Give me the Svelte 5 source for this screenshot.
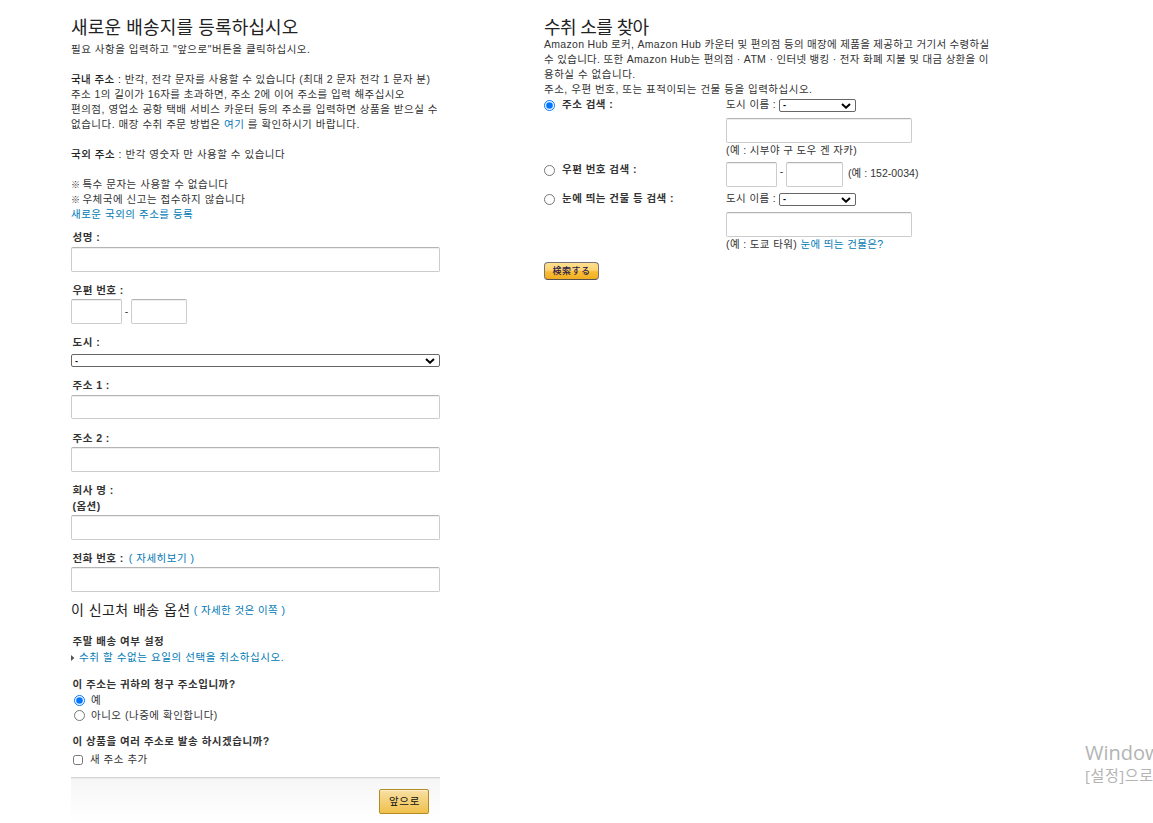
<script lang="ts">
  let billing = $state('yes')
  let searchBy = $state('address')
  let multiple = $state(false)
</script>

<div class="page">
  <form class="register" onsubmit={(e) => e.preventDefault()}>
    <h1>새로운 배송지를 등록하십시오</h1>
    <div class="intro">
      <p>필요 사항을 입력하고 "앞으로"버튼을 클릭하십시오.</p>
      <br />
      <p class="mixed"><b>국내 주소 :</b> 반각, 전각 문자를 사용할 수 있습니다 (최대 2 문자 전각 1 문자 분)</p>
      <p class="mixed">주소 1의 길이가 16자를 초과하면, 주소 2에 이어 주소를 입력 해주십시오</p>
      <p>편의점, 영업소 공항 택배 서비스 카운터 등의 주소를 입력하면 상품을 받으실 수</p>
      <p>없습니다. 매장 수취 주문 방법은 <a href="#here">여기</a> 를 확인하시기 바랍니다.</p>
      <br />
      <p><b>국외 주소 :</b> 반각 영숫자 만 사용할 수 있습니다</p>
      <br />
      <p><span class="mark">※</span> 특수 문자는 사용할 수 없습니다</p>
      <p><span class="mark">※</span> 우체국에 신고는 접수하지 않습니다</p>
      <p><a href="#overseas">새로운 국외의 주소를 등록</a></p>
    </div>

    <div class="field name">
      <label for="name">성명 :</label>
      <input id="name" type="text" />
    </div>
    <div class="field zip">
      <label for="zip1">우편 번호 :</label>
      <div class="zip-row">
        <input id="zip1" class="zip1" type="text" />
        <span class="dash">-</span>
        <input class="zip2" type="text" />
      </div>
    </div>
    <div class="field city">
      <label for="city">도시 :</label>
      <select id="city"><option>-</option></select>
    </div>
    <div class="field addr1">
      <label for="addr1">주소 1 :</label>
      <input id="addr1" type="text" />
    </div>
    <div class="field addr2">
      <label for="addr2">주소 2 :</label>
      <input id="addr2" type="text" />
    </div>
    <div class="field company">
      <label for="company">회사 명 :<br />(옵션)</label>
      <input id="company" type="text" />
    </div>
    <div class="field phone">
      <div class="label-row">
        <label for="phone">전화 번호 :</label>
        <a href="#phone-detail">( 자세히보기 )</a>
      </div>
      <input id="phone" type="text" />
    </div>

    <div class="options-head">
      <h2>이 신고처 배송 옵션</h2>
      <a href="#options">( 자세한 것은 이쪽 )</a>
    </div>

    <div class="weekend">
      <p class="title">주말 배송 여부 설정</p>
      <div class="toggle">
        <svg width="4" height="6" viewBox="0 0 4 6"><path d="M0 0L3.4 3L0 6Z" fill="#555" /></svg>
        <a href="#days">수취 할 수없는 요일의 선택을 취소하십시오.</a>
      </div>
    </div>

    <div class="question">
      <p class="title">이 주소는 귀하의 청구 주소입니까?</p>
      <label class="choice"><input type="radio" value="yes" bind:group={billing} />예</label>
      <label class="choice no"><input type="radio" value="no" bind:group={billing} />아니오 (나중에 확인합니다)</label>
    </div>

    <div class="question multi">
      <p class="title">이 상품을 여러 주소로 발송 하시겠습니까?</p>
      <label class="choice"><input type="checkbox" bind:checked={multiple} />새 주소 추가</label>
    </div>

    <div class="footer">
      <button class="next">앞으로</button>
    </div>
  </form>

  <form class="pickup" onsubmit={(e) => e.preventDefault()}>
    <h1>수취 소를 찾아</h1>
    <div class="intro">
      <p class="latin">Amazon Hub 로커, Amazon Hub 카운터 및 편의점 등의 매장에 제품을 제공하고 거기서 수령하실</p>
      <p class="latin">수 있습니다. 또한 Amazon Hub는 편의점 · ATM · 인터넷 뱅킹 · 전자 화폐 지불 및 대금 상환을 이</p>
      <p>용하실 수 없습니다.</p>
      <p>주소, 우편 번호, 또는 표적이되는 건물 등을 입력하십시오.</p>
    </div>

    <div class="row by-address">
      <input type="radio" value="address" bind:group={searchBy} />
      <p class="title">주소 검색 :</p>
      <div class="cell">
        <div class="city-row">도시 이름 : <select><option>-</option></select></div>
        <input type="text" />
        <p>(예 : 시부야 구 도우 겐 자카)</p>
      </div>
    </div>
    <div class="row by-zip">
      <input type="radio" value="zip" bind:group={searchBy} />
      <p class="title">우편 번호 검색 :</p>
      <div class="cell zip-row">
        <input class="zip1" type="text" />
        <span class="dash">-</span>
        <input class="zip2" type="text" />
        <span class="example">(예 : 152-0034)</span>
      </div>
    </div>
    <div class="row by-landmark">
      <input type="radio" value="landmark" bind:group={searchBy} />
      <p class="title">눈에 띄는 건물 등 검색 :</p>
      <div class="cell">
        <div class="city-row">도시 이름 : <select><option>-</option></select></div>
        <input type="text" />
        <p>(예 : 도쿄 타워) <a href="#landmark">눈에 띄는 건물은?</a></p>
      </div>
    </div>

    <button class="search">検索する</button>
  </form>

  <div class="watermark">
    <div class="wm-title">Windows</div>
    <div class="wm-text">[설정]으로</div>
  </div>
</div>

<style>
  :global(body) {
    background: #fff;
    overflow: hidden;
  }

  .page {
    position: relative;
    display: flex;
    align-items: flex-start;
    gap: 104px;
    width: 1153px;
    height: 823px;
    padding: 16px 0 0 71px;
    box-sizing: border-box;
    overflow: hidden;
    color: #333;
    font-family: 'Liberation Sans', 'Noto Sans CJK KR', sans-serif;
    font-size: 10.5px;
    line-height: 15px;
    letter-spacing: 0.52px;
    white-space: nowrap;
  }

  .register { width: 369px; }
  .pickup { width: 450px; }

  h1, h2, p { margin: 0; font-weight: 400; }

  h1 {
    height: 26px;
    font-size: 18px;
    line-height: 25px;
    letter-spacing: 0.15px;
    color: #222;
  }

  .pickup h1 { height: 21px; letter-spacing: -0.6px; }

  b { font-weight: 500; color: #222; }
  .title, .field label { font-weight: 700; color: #333; letter-spacing: 0.47px; }

  a { color: #0079b5; text-decoration: none; }

  .intro p { height: 15px; }
  .intro .mixed { letter-spacing: 0.42px; }
  .intro .latin { letter-spacing: 0.31px; }
  .mark { display: inline-block; width: 8px; font-size: 9px; line-height: 1; letter-spacing: 0; }

  input[type='text'] {
    display: block;
    width: 100%;
    height: 25px;
    box-sizing: border-box;
    border: 1px solid #ccc;
    border-top-color: #b4b4b4;
    border-radius: 2px;
    background: #fff;
    box-shadow: inset 0 1px 0 #eee;
  }

  input[type='radio'] { width: 11px; height: 11px; margin: 0; }
  input[type='checkbox'] { width: 10px; height: 10px; margin: 0; }

  select {
    appearance: none;
    height: 13px;
    padding: 0 16px 0 3px;
    border: 1px solid #666;
    border-radius: 2px;
    background: #fff url("data:image/svg+xml,%3Csvg xmlns='http://www.w3.org/2000/svg' width='10' height='6'%3E%3Cpath d='M1 1L5 4.7L9 1' fill='none' stroke='%23000' stroke-width='2'/%3E%3C/svg%3E") no-repeat right 4px top 3px;
    color: #000;
    font: bold 9px 'Liberation Sans', sans-serif;
  }

  .field label { display: block; padding-left: 1.5px; }
  .field select { display: block; width: 100%; }

  .name { padding-top: 8px; }
  .name input { margin-top: 2px; }
  .zip { padding-top: 11px; }
  .zip .zip-row { margin-top: 1px; }
  .zip-row { display: flex; align-items: center; }
  .zip-row .zip1 { width: 51px; }
  .zip-row .zip2 { width: 57px; }
  .field .zip2 { width: 56px; }
  .dash { width: 9px; text-align: center; letter-spacing: 0; }
  .city { padding-top: 11px; }
  .city select { margin-top: 4px; }
  .addr1 { padding-top: 11px; }
  .addr1 input { margin-top: 2px; height: 24px; }
  .addr2 { padding-top: 12px; }
  .addr2 input { margin-top: 1px; }
  .company { padding-top: 11px; }
  .company label { line-height: 15.5px; }
  .company input { margin-top: 1px; }
  .phone { padding-top: 11px; }
  .phone input { margin-top: 1px; }
  .label-row { display: flex; gap: 5px; }

  .options-head {
    display: flex;
    align-items: center;
    gap: 3px;
    height: 20px;
    margin-top: 8px;
  }

  h2 { font-size: 14px; line-height: 20px; letter-spacing: 0.45px; color: #222; }
  .options-head a { letter-spacing: 0.42px; }

  .weekend { padding-top: 14px; }
  .weekend .title, .question .title { padding-left: 1.5px; letter-spacing: 0.52px; }
  .toggle { display: flex; align-items: center; gap: 4px; margin-top: 1px; letter-spacing: 0.58px; }

  .question { padding-top: 12px; }
  .choice { display: flex; align-items: center; gap: 6px; padding-left: 3px; margin-top: 1px; }
  .choice.no { margin-top: 0; }
  .multi { padding-top: 11px; }
  .multi .choice { gap: 7px; padding-left: 2px; margin-top: 3px; }

  .footer {
    display: flex;
    justify-content: flex-end;
    height: 46px;
    margin-top: 10px;
    padding: 11px 11px 0 0;
    box-sizing: border-box;
    border-top: 1px solid #d5d5d5;
    box-shadow: inset 0 1px 0 #eaeaea;
    background: linear-gradient(#f6f6f6, #fff);
  }

  .next {
    width: 50px;
    height: 25px;
    padding: 0 0 3px 1px;
    border: 1px solid #b38b22;
    border-radius: 2px;
    background: linear-gradient(#f7dfa5, #f0c14b);
    box-shadow: inset 0 1px 0 #fbeecb;
    color: #111;
    font: 10.5px 'Liberation Sans', 'Noto Sans CJK KR', sans-serif;
    letter-spacing: 0.6px;
  }

  .row {
    display: grid;
    grid-template-columns: 18px 164px auto;
    align-items: start;
  }

  .row input[type='radio'] { margin-top: 3px; }
  .row .cell { letter-spacing: 0.38px; }
  .row .cell input[type='text'] { width: 186px; }
  .row .cell input.zip1 { width: 51px; }
  .row .cell input.zip2 { width: 57px; }
  .row .dash { margin-top: -6px; }
  .city-row { display: flex; align-items: center; gap: 3px; height: 15px; }
  .city-row select { width: 77px; margin-top: 1px; }
  .city-row + input { margin-top: 6px; }
  .by-zip { margin-top: 4px; }
  .by-landmark { margin-top: 4px; }
  .row .example { margin: -2px 0 0 5px; letter-spacing: 0.05px; }

  .search {
    display: block;
    width: 55px;
    height: 18px;
    margin-top: 10px;
    padding: 0 0 1px;
    border: 1px solid #77747a;
    border-bottom-color: #55524f;
    border-radius: 4px;
    background: linear-gradient(#ffe08f, #fdd371 45%, #f9bd33 55%, #f0ae22);
    color: #2b1a4a;
    font: 500 9px 'Noto Sans CJK JP', sans-serif;
    letter-spacing: 0.5px;
  }

  /* desktop overlay, cut off by the window edge */
  .watermark {
    position: absolute;
    left: 1085px;
    top: 741px;
    color: #b4b4b4;
    font-family: 'Open Sans', 'Noto Sans CJK KR', sans-serif;
    letter-spacing: 0;
  }

  .wm-title { font-size: 20px; line-height: 24px; }
  .wm-text { font-size: 15px; line-height: 20px; letter-spacing: 0.6px; }
</style>
